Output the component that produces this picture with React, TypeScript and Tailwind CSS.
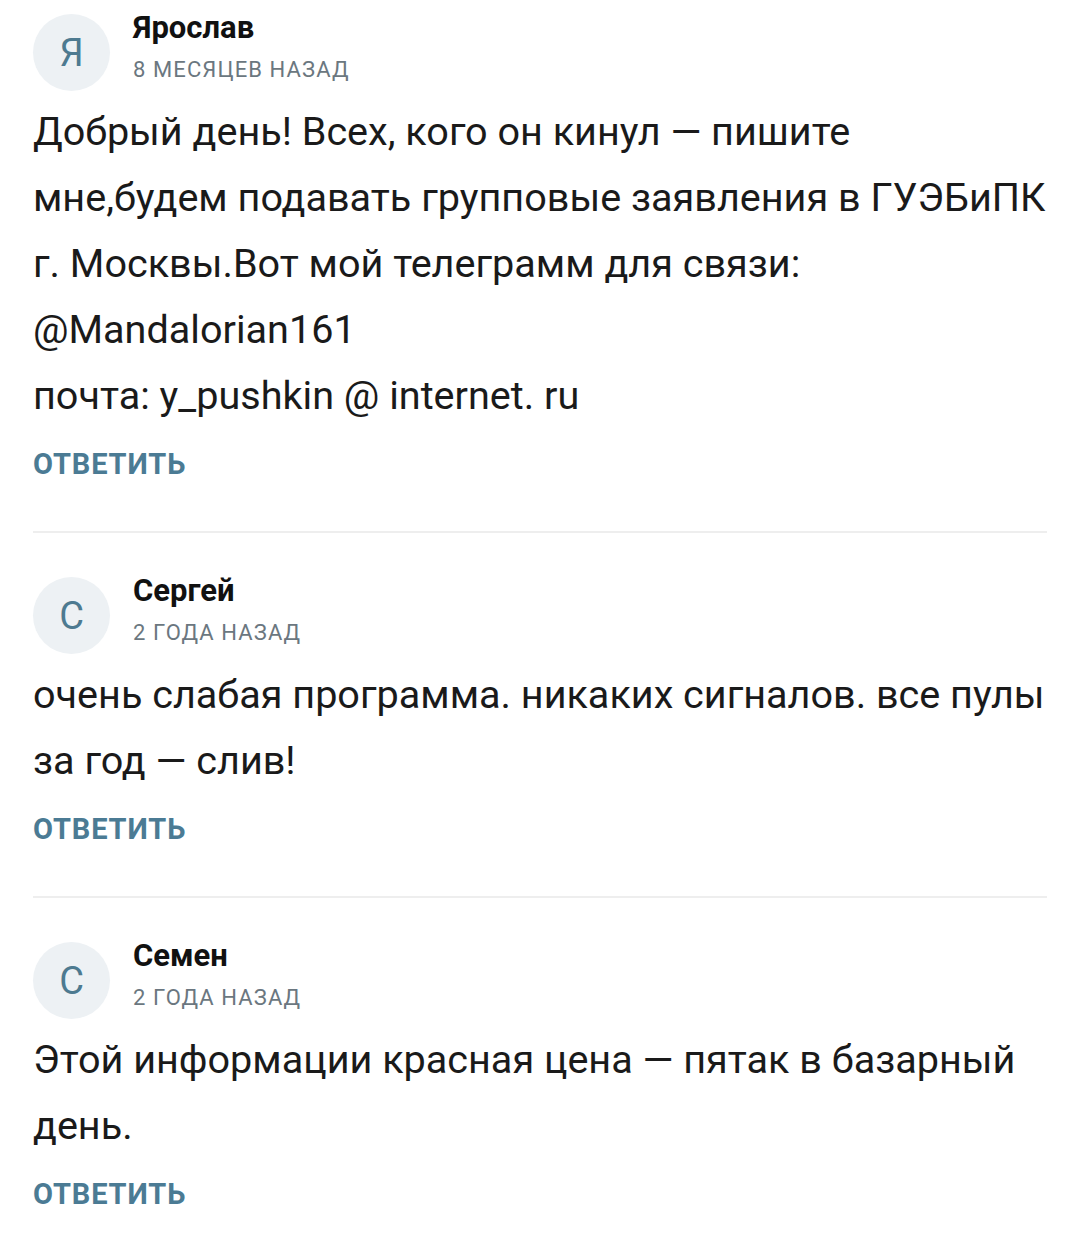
import React from "react";

type C = { letter: string; name: string; time: string; lines: string[] };

const comments: C[] = [
  {
    letter: "Я",
    name: "Ярослав",
    time: "8 МЕСЯЦЕВ НАЗАД",
    lines: [
      "Добрый день! Всех, кого он кинул — пишите",
      "мне,будем подавать групповые заявления в ГУЭБиПК",
      "г. Москвы.Вот мой телеграмм для связи:",
      "@Mandalorian161",
      "почта: y_pushkin @ internet. ru",
    ],
  },
  {
    letter: "С",
    name: "Сергей",
    time: "2 ГОДА НАЗАД",
    lines: ["очень слабая программа. никаких сигналов. все пулы", "за год — слив!"],
  },
  {
    letter: "С",
    name: "Семен",
    time: "2 ГОДА НАЗАД",
    lines: ["Этой информации красная цена — пятак в базарный", "день."],
  },
];

function Comment({ c, last }: { c: C; last: boolean }) {
  return (
    <div className={last ? "pt-[14px]" : "pt-[14px] pb-[51px] border-b-2 border-[#eeeeee]"}>
      <div className="flex items-center gap-[23px]">
        <div className="w-[77px] h-[77px] rounded-full bg-[#edf1f4] flex items-center justify-center text-[#4d7a90] text-[38px] leading-none">
          {c.letter}
        </div>
        <div className="flex flex-col">
          <div className="text-[31px] font-bold text-[#111111] leading-[34px] -mt-[11px]">{c.name}</div>
          <div className="text-[22px] text-[#6b7780] tracking-[0.05em] leading-[26px] mt-[12px]">{c.time}</div>
        </div>
      </div>
      <div className="mt-[8px] text-[39.6px] leading-[66px] text-[#1a1a1a]">
        {c.lines.map((l, i) => (
          <div key={i} className="whitespace-nowrap">{l}</div>
        ))}
      </div>
      <div className="mt-[19px] text-[29px] font-bold text-[#4b7b94] tracking-[0.03em] leading-[32px]">ОТВЕТИТЬ</div>
    </div>
  );
}

export default function App() {
  return (
    <div className="w-[1080px] h-[1239px] bg-white px-[33px] overflow-hidden" style={{ fontFamily: "Roboto, 'Noto Sans', sans-serif" }}>
      {comments.map((c, i) => (
        <div key={i} className={i > 0 ? "pt-[30px]" : ""}>
          <Comment c={c} last={i === comments.length - 1} />
        </div>
      ))}
    </div>
  );
}
